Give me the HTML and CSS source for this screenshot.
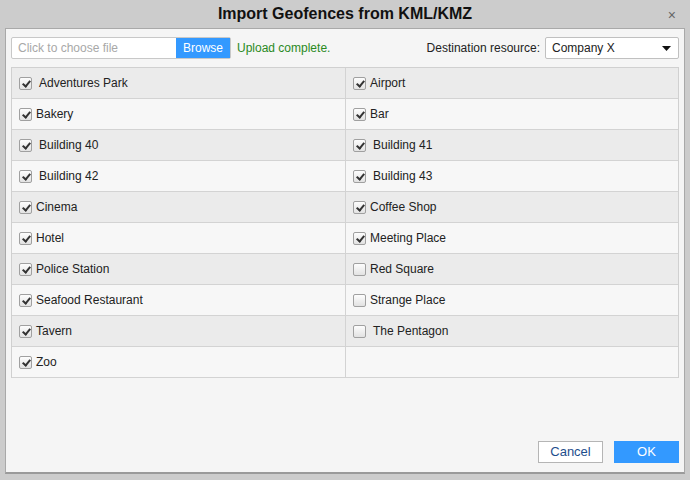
FILE: index.html
```html
<!DOCTYPE html>
<html>
<head>
<meta charset="utf-8">
<link rel="stylesheet" href="styles.css">
</head>
<body>
<div class="dialog">
  <div class="titlebar">
    <div class="title">Import Geofences from KML/KMZ</div>
    <div class="close">×</div>
  </div>
  <div class="panel">
    <div class="toolbar">
      <div class="file">
        <span class="placeholder">Click to choose file</span>
        <span class="browse">Browse</span>
      </div>
      <span class="status">Upload complete.</span>
      <span class="spacer"></span>
      <span class="dest-label">Destination resource:</span>
      <div class="select">
        <span>Company X</span>
        <svg class="caret" width="9" height="5" viewBox="0 0 9 5"><path d="M0 0h9L4.5 5z" fill="#111"/></svg>
      </div>
    </div>
    <div class="grid">
      <div class="cell odd"><span class="cb on"></span><span class="lbl sp">Adventures Park</span></div>
      <div class="cell odd"><span class="cb on"></span><span class="lbl">Airport</span></div>
      <div class="cell"><span class="cb on"></span><span class="lbl">Bakery</span></div>
      <div class="cell"><span class="cb on"></span><span class="lbl">Bar</span></div>
      <div class="cell odd"><span class="cb on"></span><span class="lbl sp">Building 40</span></div>
      <div class="cell odd"><span class="cb on"></span><span class="lbl sp">Building 41</span></div>
      <div class="cell"><span class="cb on"></span><span class="lbl sp">Building 42</span></div>
      <div class="cell"><span class="cb on"></span><span class="lbl sp">Building 43</span></div>
      <div class="cell odd"><span class="cb on"></span><span class="lbl">Cinema</span></div>
      <div class="cell odd"><span class="cb on"></span><span class="lbl">Coffee Shop</span></div>
      <div class="cell"><span class="cb on"></span><span class="lbl">Hotel</span></div>
      <div class="cell"><span class="cb on"></span><span class="lbl">Meeting Place</span></div>
      <div class="cell odd"><span class="cb on"></span><span class="lbl">Police Station</span></div>
      <div class="cell odd"><span class="cb"></span><span class="lbl">Red Square</span></div>
      <div class="cell"><span class="cb on"></span><span class="lbl">Seafood Restaurant</span></div>
      <div class="cell"><span class="cb"></span><span class="lbl">Strange Place</span></div>
      <div class="cell odd"><span class="cb on"></span><span class="lbl">Tavern</span></div>
      <div class="cell odd"><span class="cb"></span><span class="lbl sp">The Pentagon</span></div>
      <div class="cell"><span class="cb on"></span><span class="lbl">Zoo</span></div>
      <div class="cell"></div>
    </div>
    <div class="footer">
      <span class="btn cancel">Cancel</span>
      <span class="btn ok">OK</span>
    </div>
  </div>
</div>
</body>
</html>
```
FILE: styles.css
```css
html, body {
  margin: 0;
  padding: 0;
  background: #cccccc;
  font-family: "Liberation Sans", Arial, sans-serif;
  font-size: 12px;
  color: #222;
}
.dialog {
  width: 690px;
  height: 480px;
  display: flex;
  flex-direction: column;
}
.titlebar {
  height: 28px;
  position: relative;
  display: flex;
  align-items: center;
  justify-content: center;
}
.title {
  font-weight: bold;
  font-size: 16px;
  color: #111;
}
.close {
  position: absolute;
  right: 14px;
  top: 7px;
  font-size: 14px;
  color: #666;
}
.panel {
  margin: 0 5px;
  height: 446px;
  box-sizing: border-box;
  background: #f5f5f5;
  border: 1px solid #a9a9a9;
  border-bottom: 2px solid #9a9a9a;
  padding: 8px 5px 0 5px;
  display: flex;
  flex-direction: column;
}
.toolbar {
  display: flex;
  align-items: center;
  height: 22px;
}
.file {
  display: flex;
  width: 220px;
  height: 22px;
  box-sizing: border-box;
  border: 1px solid #c8c8c8;
  background: #fff;
  border-radius: 2px;
}
.placeholder {
  flex: 1;
  color: #a8a8a8;
  padding-left: 6px;
  line-height: 20px;
}
.browse {
  width: 54px;
  background: #3399ff;
  color: #fff;
  text-align: center;
  line-height: 20px;
}
.status {
  color: #2a8a1e;
  margin-left: 6px;
}
.spacer { flex: 1; }
.dest-label {
  color: #222;
  margin-right: 5px;
}
.select {
  width: 134px;
  height: 22px;
  box-sizing: border-box;
  border: 1px solid #c0c0c0;
  background: #fff;
  display: flex;
  align-items: center;
  justify-content: space-between;
  padding: 0 7px 0 6px;
  border-radius: 2px;
}
.grid {
  margin-top: 8px;
  display: grid;
  grid-template-columns: 334px 1fr;
  border: 1px solid #d0d0d0;
  border-bottom: none;
}
.cell {
  height: 30px;
  border-bottom: 1px solid #d3d3d3;
  display: flex;
  align-items: center;
  padding-left: 7px;
  background: #f7f7f7;
}
.cell:nth-child(odd) {
  border-right: 1px solid #d3d3d3;
}
.cell.odd {
  background: #ebebeb;
}
.cb {
  width: 11px;
  height: 11px;
  border: 1px solid #a0a0a0;
  border-radius: 2px;
  background: linear-gradient(#fdfdfd, #e2e2e2);
  position: relative;
  flex: none;
}
.cb.on::after {
  content: "";
  position: absolute;
  left: 3.5px;
  top: 1px;
  width: 3px;
  height: 6px;
  border: solid #333;
  border-width: 0 2px 2px 0;
  transform: rotate(40deg);
}
.lbl {
  margin-left: 4px;
  color: #222;
}
.lbl.sp {
  margin-left: 7px;
}
.footer {
  margin-top: auto;
  margin-bottom: 9px;
  display: flex;
  justify-content: flex-end;
  gap: 11px;
}
.btn {
  height: 22px;
  box-sizing: border-box;
  line-height: 20px;
  text-align: center;
  font-size: 13px;
}
.cancel {
  width: 65px;
  border: 1px solid #b5b5b5;
  background: #fff;
  color: #1e4e8c;
}
.ok {
  width: 65px;
  border: 1px solid #3399ff;
  background: #3399ff;
  color: #fff;
}
```
